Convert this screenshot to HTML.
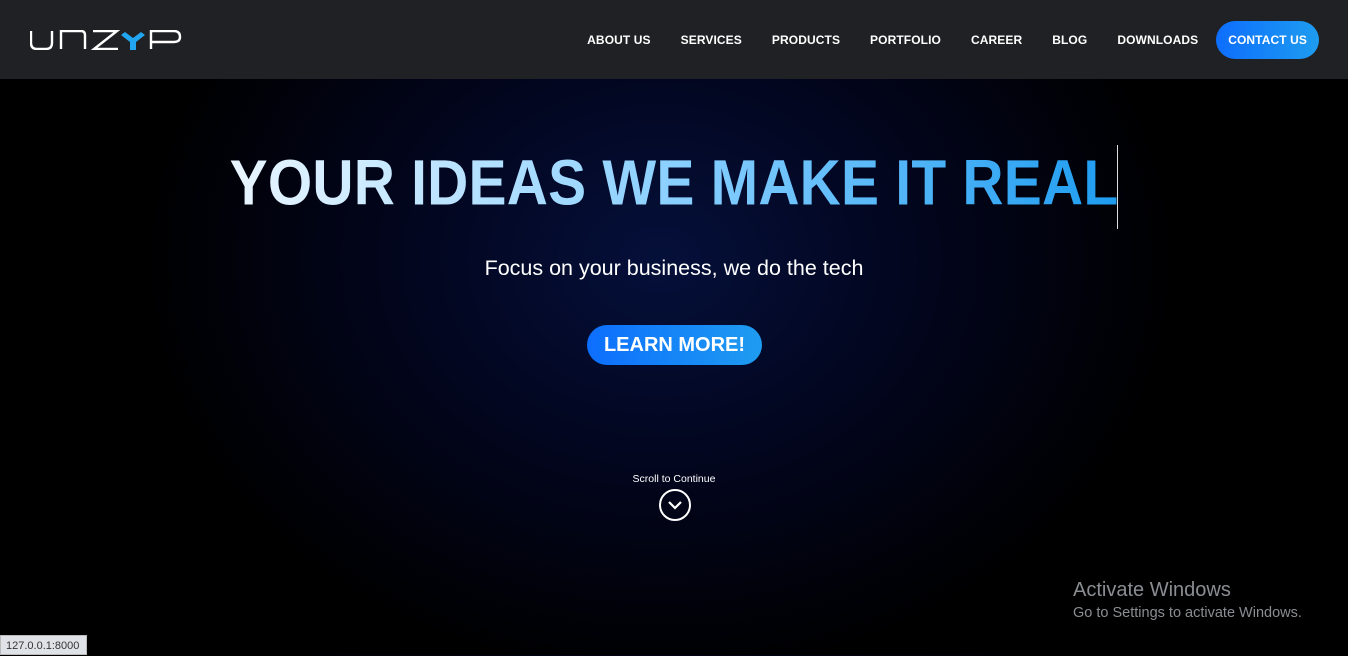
<!DOCTYPE html>
<html><head><meta charset="utf-8"><style>
*{margin:0;padding:0;box-sizing:border-box}
body{width:1348px;height:655px;overflow:hidden;font-family:"Liberation Sans",sans-serif;background:radial-gradient(ellipse 520px 420px at 660px 260px,#05103a 0%,#020620 45%,#000 100%);position:relative;color:#fff}
header{position:absolute;left:0;top:0;width:1348px;height:79px;background:#202124}
.logo{position:absolute;left:30px;top:30px}
nav{position:absolute;right:29px;top:21px;display:flex;align-items:center}
nav a{color:#fff;font-weight:bold;font-size:12px;margin-left:30px;text-decoration:none;letter-spacing:0.1px}
nav a.c{background:linear-gradient(90deg,#0d6efd,#1e9cf0);border-radius:19px;padding:12px 12px;margin-left:18px}
h1{position:absolute;left:0;width:1348px;top:150px;text-align:center;font-size:57px;font-weight:bold;letter-spacing:0.2px;transform:scaleY(1.12)}
h1 span{background:linear-gradient(90deg,#eaf6ff,#8ad0ff 50%,#1e9cf0);-webkit-background-clip:text;background-clip:text;color:transparent}
.cursor{position:absolute;left:1117px;top:145px;width:1px;height:84px;background:#ddd}
.sub{position:absolute;top:256px;width:1348px;text-align:center;font-size:21.5px}
.btn{position:absolute;left:587px;top:325px;width:175px;height:40px;border-radius:20px;background:linear-gradient(90deg,#0d6efd,#1e9cf0);font-weight:bold;font-size:20px;text-align:center;line-height:40px}
.sc{position:absolute;top:473px;width:1348px;text-align:center;font-size:10.5px}
.win{position:absolute;left:1073px;top:579px;color:#8a8d92}
.win div:first-child{font-size:20px}
.win div:last-child{font-size:14.5px;margin-top:3px}
.url{position:absolute;left:0;top:635px;width:87px;height:20px;background:#dfe3e8;color:#333;font-size:11px;line-height:20px;padding-left:5px;border:1px solid #bbb}
</style></head><body>
<header>
<svg class="logo" width="152" height="20" viewBox="0 0 152 20"><g fill="none" stroke="#fff" stroke-width="2.4">
<path d="M1 1v12q0 6 6 6h9q6 0 6-6V1"/>
<path d="M31 19V1h20q4 0 4 4v14"/>
<path d="M63 1h24L64 19h24"/>
<path d="M121 19V1h23q6 0 6 6v0q0 5-6 5h-23"/></g>
<path d="M95 2l8 6 8-6 4 3-9 7v8h-6v-8l-9-7z" fill="#22a6f2"/>
</svg>
<nav><a>ABOUT US</a><a>SERVICES</a><a>PRODUCTS</a><a>PORTFOLIO</a><a>CAREER</a><a>BLOG</a><a>DOWNLOADS</a><a class="c">CONTACT US</a></nav>
</header>
<h1><span>YOUR IDEAS WE MAKE IT REAL</span></h1>
<div class="cursor"></div>
<div class="sub">Focus on your business, we do the tech</div>
<div class="btn">LEARN MORE!</div>
<div class="sc">Scroll to Continue</div>
<svg style="position:absolute;left:658px;top:488px" width="34" height="34" viewBox="0 0 34 34"><circle cx="17" cy="17" r="15" fill="none" stroke="#fff" stroke-width="2"/><path d="M11 14l6 6 6-6" fill="none" stroke="#fff" stroke-width="2.2"/></svg>
<div class="win"><div>Activate Windows</div><div>Go to Settings to activate Windows.</div></div>
<div class="url">127.0.0.1:8000</div>
</body></html>
